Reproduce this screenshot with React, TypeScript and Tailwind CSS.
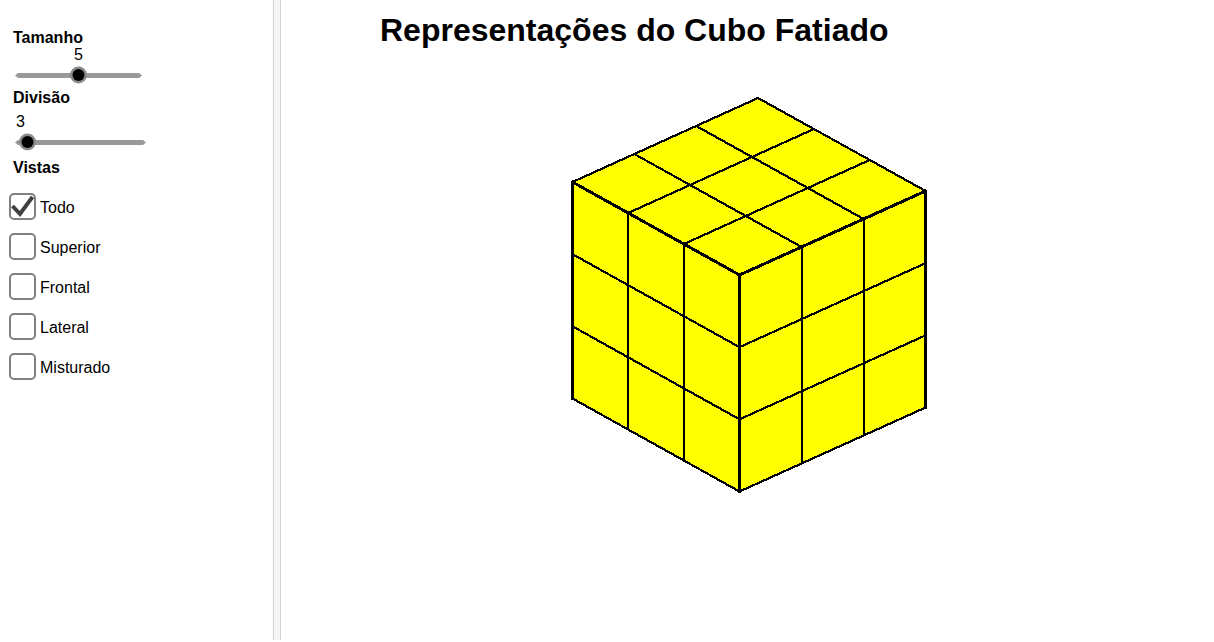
import React from 'react';

const checks = [
  { label: 'Todo', checked: true },
  { label: 'Superior', checked: false },
  { label: 'Frontal', checked: false },
  { label: 'Lateral', checked: false },
  { label: 'Misturado', checked: false },
];

function lerp(a: number[], b: number[], t: number) {
  return [a[0] + (b[0] - a[0]) * t, a[1] + (b[1] - a[1]) * t];
}

// Cube corners, in screenshot pixels minus the svg origin (560, 90)
const L = [12.5, 92];
const F = [179.5, 185];
const R = [365.6, 101];
const B = [198, 8];
const H = 216.5;

function down(p: number[], t = 1) {
  return [p[0], p[1] + H * t];
}

function Seg({ a, b, w = 2 }: { a: number[]; b: number[]; w?: number }) {
  return <line x1={a[0]} y1={a[1]} x2={b[0]} y2={b[1]} stroke="#000" strokeWidth={w} strokeLinecap="round" />;
}

function Cube() {
  const ts = [1 / 3, 2 / 3];
  return (
    <svg width="380" height="410" viewBox="0 0 380 410" className="block" shapeRendering="crispEdges">
      <polygon
        points={`${L} ${B} ${R} ${down(R)} ${down(F)} ${down(L)}`}
        fill="#ffff00"
      />
      {ts.map((t) => (
        <g key={t}>
          {/* top face */}
          <Seg a={lerp(L, B, t)} b={lerp(F, R, t)} w={2.2} />
          <Seg a={lerp(L, F, t)} b={lerp(B, R, t)} w={2.2} />
          {/* left face */}
          <Seg a={lerp(L, F, t)} b={down(lerp(L, F, t))} />
          <Seg a={down(L, t)} b={down(F, t)} w={2.2} />
          {/* right face */}
          <Seg a={lerp(F, R, t)} b={down(lerp(F, R, t))} />
          <Seg a={down(F, t)} b={down(R, t)} w={2.2} />
        </g>
      ))}
      <Seg a={L} b={B} w={2.2} />
      <Seg a={B} b={R} w={2.2} />
      <Seg a={L} b={F} w={3} />
      <Seg a={F} b={R} w={3} />
      <Seg a={L} b={down(L)} w={3} />
      <Seg a={F} b={down(F)} w={3} />
      <Seg a={R} b={down(R)} w={3} />
      <Seg a={down(L)} b={down(F)} w={2.2} />
      <Seg a={down(F)} b={down(R)} w={2.2} />
    </svg>
  );
}

function Slider({ width, thumb }: { width: number; thumb: number }) {
  return (
    <svg width={width} height="20" viewBox={`0 0 ${width} 20`} className="block">
      <polygon points={`0,10.5 3,8 ${width - 3},8 ${width},10.5 ${width - 3},13 3,13`} fill="#999999" />
      <circle cx={thumb} cy="10" r="8.5" fill="#8a8a8a" />
      <circle cx={thumb} cy="10" r="6" fill="#000" />
    </svg>
  );
}

export default function App() {
  return (
    <div className="flex h-[640px] bg-white text-black font-['Liberation_Sans',Arial,sans-serif]">
      {/* Left panel */}
      <aside className="w-[273px] shrink-0 pt-[29px]">
        <div className="pl-[13px] text-base font-bold leading-[18px]">Tamanho</div>
        <div className="pl-[74px] -mt-[1px] text-base leading-[18px]">5</div>
        <div className="pl-[15px] mt-[1px]">
          <Slider width={127} thumb={63.5} />
        </div>
        <div className="pl-[13px] mt-[4px] text-base font-bold leading-[18px]">Divisão</div>
        <div className="pl-[16px] mt-[6px] text-base leading-[18px]">3</div>
        <div className="pl-[15px] mt-[1px]">
          <Slider width={131} thumb={12.5} />
        </div>
        <div className="pl-[13px] mt-[7px] text-base font-bold leading-[18px]">Vistas</div>
        <div className="pl-[9px] mt-[16px] flex flex-col gap-[14px]">
          {checks.map((c) => (
            <div key={c.label} className="flex items-start gap-[4px] h-[26px]">
              <div className="w-[27px] h-[27px] border-2 border-[#808080] rounded-[5px] flex items-center justify-center">
                {c.checked && (
                  <svg width="23" height="23" viewBox="0 0 23 23">
                    <path d="M1.5 11 L9 19 L21.5 2" fill="none" stroke="#404040" strokeWidth="4" />
                  </svg>
                )}
              </div>
              <span className="mt-[6px] text-base leading-[18px]">{c.label}</span>
            </div>
          ))}
        </div>
      </aside>

      {/* Divider */}
      <div className="w-[8px] shrink-0 bg-[#f5f5f5] border-x border-[#d4d4d4]" />

      {/* Main view */}
      <main className="flex-1 min-w-0">
        <h1 className="pl-[99px] pt-[12px] text-[32px] font-bold leading-[36px] whitespace-nowrap">
          Representações do Cubo Fatiado
        </h1>
        <div className="pl-[279px] mt-[42px]">
          <Cube />
        </div>
      </main>
    </div>
  );
}
